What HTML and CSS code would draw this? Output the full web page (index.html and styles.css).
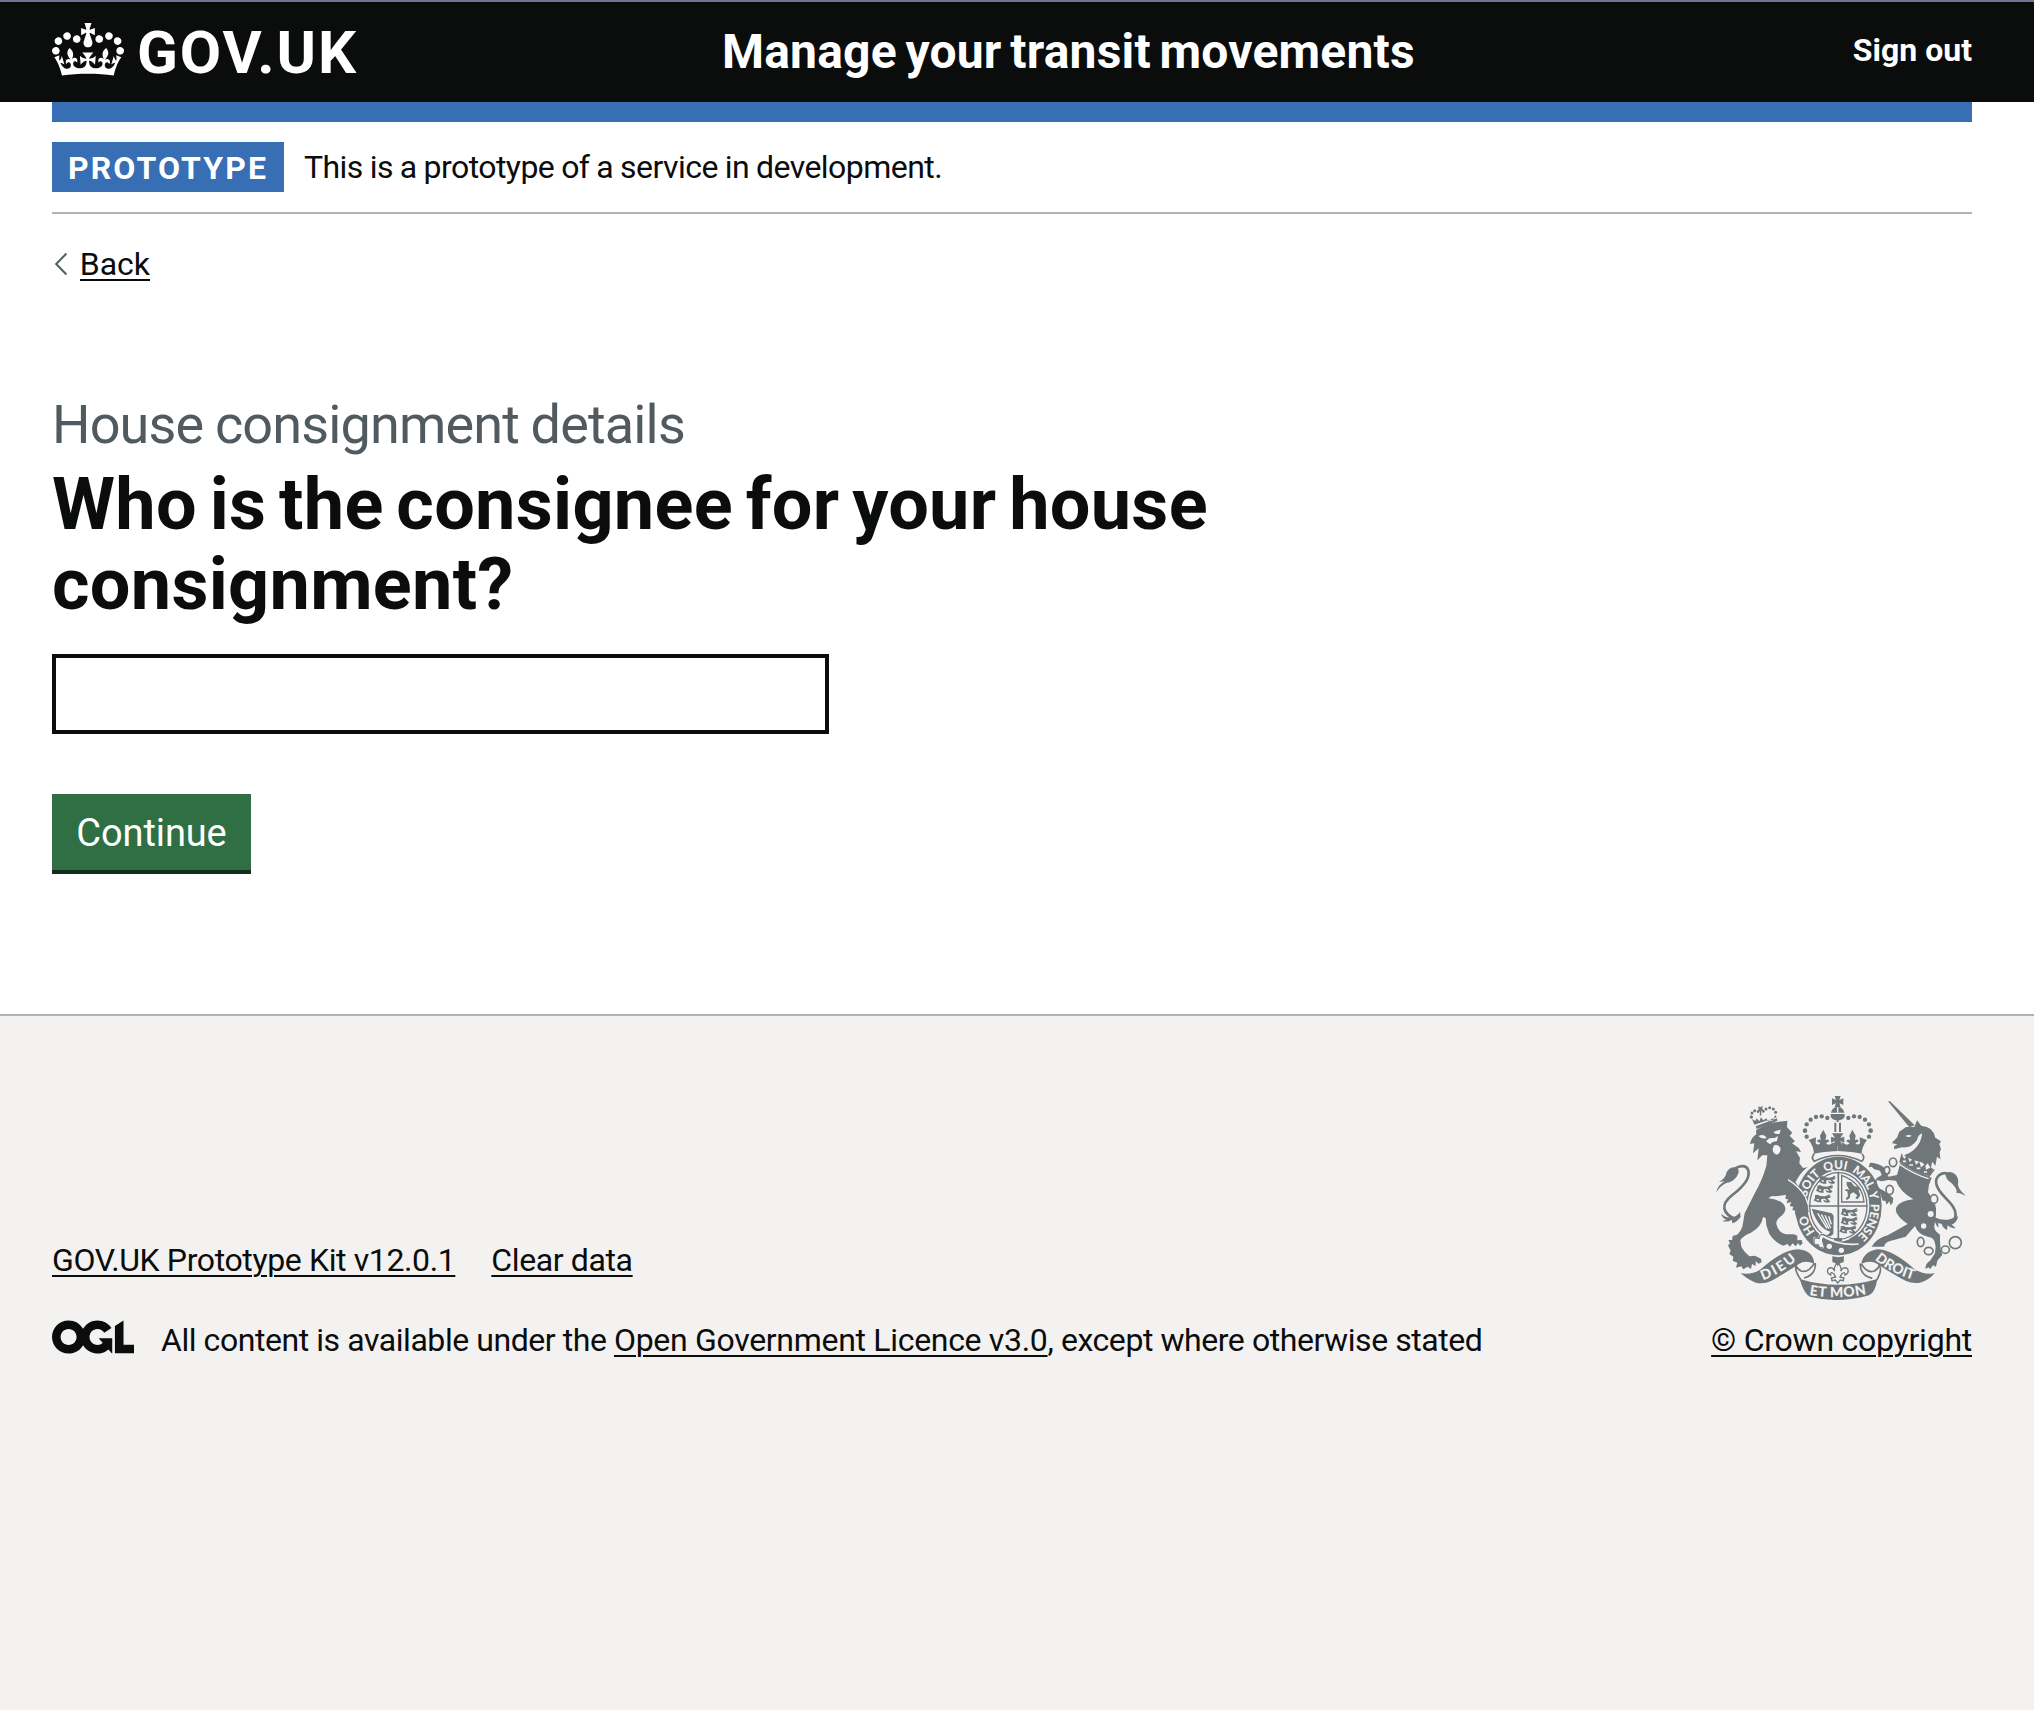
FILE: index.html
```html
<!DOCTYPE html>
<html lang="en">
<head>
<meta charset="utf-8">
<title>Who is the consignee for your house consignment? - Manage your transit movements - GOV.UK</title>
<link rel="stylesheet" href="styles.css">
</head>
<body>
<header class="header">
  <div class="container header-row">
    <a class="logo" href="#">
      <svg class="logo-crown" viewBox="0 0 132 97" aria-hidden="true"><path fill="currentColor" fill-rule="evenodd" d="M25 30.2c3.5 1.5 7.7-.2 9.1-3.7 1.5-3.6-.2-7.8-3.9-9.2-3.6-1.4-7.6.3-9.1 3.9-1.4 3.5.3 7.5 3.9 9zM9 39.5c3.6 1.5 7.8-.2 9.2-3.7 1.5-3.6-.2-7.8-3.9-9.1-3.6-1.5-7.6.2-9.1 3.8-1.4 3.5.3 7.5 3.8 9zM4.4 57.2c3.5 1.5 7.7-.2 9.1-3.8 1.5-3.6-.2-7.7-3.9-9.1-3.5-1.5-7.6.3-9.1 3.8-1.4 3.5.3 7.6 3.9 9.1zm38.3-21.4c3.5 1.5 7.7-.2 9.1-3.8 1.5-3.6-.2-7.7-3.9-9.1-3.6-1.5-7.6.3-9.1 3.8-1.3 3.6.4 7.7 3.9 9.1zm64.4-5.6c-3.6 1.5-7.8-.2-9.1-3.7-1.5-3.6.2-7.8 3.8-9.2 3.6-1.4 7.7.3 9.2 3.9 1.3 3.5-.4 7.5-3.9 9zm15.9 9.3c-3.6 1.5-7.7-.2-9.1-3.7-1.5-3.6.2-7.8 3.7-9.1 3.6-1.5 7.7.2 9.2 3.8 1.5 3.5-.3 7.5-3.8 9zm4.7 17.7c-3.6 1.5-7.8-.2-9.2-3.8-1.5-3.6.2-7.7 3.9-9.1 3.6-1.5 7.7.3 9.2 3.8 1.3 3.5-.4 7.6-3.9 9.1zM89.3 35.8c-3.6 1.5-7.8-.2-9.2-3.8-1.4-3.6.2-7.7 3.9-9.1 3.6-1.5 7.7.3 9.2 3.8 1.4 3.6-.3 7.7-3.9 9.1zM69.7 17.7l8.9 4.7V9.3l-8.9 2.8c-.2-.3-.5-.6-.9-.9L72.4 0H59.6l3.5 11.2c-.3.3-.6.5-.9.9l-8.8-2.8v13.1l8.8-4.7c.3.3.6.7.9.9l-5 15.4v.1c-.2.8-.4 1.6-.4 2.4 0 4.1 3.1 7.5 7 8.1h.2c.3 0 .7.1 1 .1.4 0 .7 0 1-.1h.2c4-.6 7.1-4.1 7.1-8.1 0-.8-.1-1.7-.4-2.4V34l-5.1-15.4c.4-.2.7-.6 1-.9zM66 92.8c16.9 0 32.8 1.1 47.1 3.2 4-16.9 8.9-26.7 14-33.5l-9.6-3.4c1 4.9 1.1 7.2 0 10.2-1.5-1.4-3-4.3-4.2-8.7L108.6 76c2.8-2 5-3.2 7.5-3.3-4.4 9.4-10 11.9-13.6 11.2-4.3-.8-6.3-4.6-5.6-7.9 1-4.7 5.7-5.9 8-.5 4.3-8.7-3-11.4-7.6-8.8 7.1-7.2 7.9-13.5 2.1-21.1-8 6.1-8.1 12.3-4.5 20.8-4.7-5.4-12.1-2.5-9.5 6.2 3.4-5.2 7.9-2 7.2 3.1-.6 4.3-6.4 7.8-13.5 7.2-10.3-.9-10.9-8-11.2-13.8 2.5-.5 7.1 1.8 11 7.3L80.2 60c-4.1 4.4-8 5.3-12.3 5.4 1.4-4.4 8-11.6 8-11.6H55.5s6.4 7.2 7.9 11.6c-4.2-.1-8-1-12.3-5.4l1.4 16.4c3.9-5.5 8.5-7.7 10.9-7.3-.3 5.8-.9 12.8-11.1 13.8-7.2.6-12.9-2.9-13.5-7.2-.7-5 3.8-8.3 7.1-3.1 2.7-8.7-4.6-11.6-9.4-6.2 3.7-8.5 3.6-14.7-4.6-20.8-5.8 7.6-5 13.9 2.2 21.1-4.7-2.6-11.9.1-7.7 8.8 2.3-5.5 7.1-4.2 8.1.5.7 3.3-1.3 7.1-5.7 7.9-3.5.7-9-1.8-13.5-11.2 2.5.1 4.7 1.3 7.5 3.3l-4.7-15.4c-1.2 4.4-2.7 7.2-4.3 8.7-1.1-3-.9-5.3 0-10.2l-9.5 3.4c5 6.9 9.9 16.7 14 33.5 14.8-2.1 30.8-3.2 47.7-3.2z"/></svg>
      <span class="logo-text">GOV.UK</span>
    </a>
    <a class="service-name" href="#">Manage your transit movements</a>
    <a class="sign-out" href="#">Sign out</a>
  </div>
</header>

<div class="container">
  <div class="phase-banner">
    <strong class="tag">PROTOTYPE</strong>
    <span class="phase-text">This is a prototype of a service in development.</span>
  </div>
  <a class="back" href="#"><svg class="back-arrow" viewBox="0 0 14 24" aria-hidden="true"><path d="M12.7 1.3 2.2 12l10.5 10.7" fill="none" stroke="currentColor" stroke-width="2"/></svg><span class="back-text">Back</span></a>
  <main class="main">
    <span class="caption">House consignment details</span>
    <h1 class="heading"><label for="consignee">Who is the consignee for your house consignment?</label></h1>
    <input class="input" id="consignee" type="text">
    <button class="button">Continue</button>
  </main>
</div>

<footer class="footer">
  <div class="container footer-row">
    <div>
      <nav class="footer-links">
        <a class="link" href="#">GOV.UK Prototype Kit v12.0.1</a>
        <a class="link" href="#">Clear data</a>
      </nav>
      <div class="licence">
        <svg class="ogl" viewBox="0 0 483.2 195.7" aria-hidden="true"><path fill="currentColor" d="M421.5 142.8V.1l-50.7 32.3v161.1h112.4v-50.7zm-122.3-9.6A47.12 47.12 0 0 1 221 97.8c0-26 21.1-47.1 47.1-47.1 16.7 0 31.4 8.7 39.7 21.8l42.7-27.2A97.63 97.63 0 0 0 268.1 0c-36.5 0-68.3 20.1-85.1 49.7A98 98 0 0 0 97.8 0C43.9 0 0 43.9 0 97.8s43.9 97.8 97.8 97.8c36.5 0 68.3-20.1 85.1-49.7a97.76 97.76 0 0 0 149.6 25.4l19.4 22.2h3v-87.8h-80l24.3 27.5zM97.8 145c-26 0-47.1-21.1-47.1-47.1s21.1-47.1 47.1-47.1 47.1 21.1 47.1 47.1S123.8 145 97.8 145"/></svg>
        <span>All content is available under the <a class="link licence-link" href="#">Open Government Licence v3.0</a>, except where otherwise stated</span>
      </div>
    </div>
    <div class="copyright">
      <svg class="crest" viewBox="48 48 750 612" aria-hidden="true">
        <defs>
          <path id="garter" d="M415 489C360 489 318 440 318 378S360 267 415 267 512 316 512 378 470 489 415 489"/>
          <path id="dieu" d="M189 601Q245 580 291 539"/>
          <path id="etmon" d="M328 645Q415 660 504 641"/>
          <path id="droit" d="M524 538Q570 580 646 601"/>
          <g id="passant"><path d="M2 2l8-2 7 4 14 1 10-3 8 3-2 5-8 1 5 6-5 2-7-7-10 1-3 7-7 1 2-7-6-2-4 7-6-1 4-9zM4 14l8 4 8 0 2 5-10 0-9-3zM26 15l10 3 8-2 4 5-8 3-10-2z"/><path d="M38 6q7-9 10-4" fill="none" stroke-width="3" class="line"/></g>
          <g id="half-crown"><circle cx="382" cy="114" r="6.500"/><circle cx="365" cy="109" r="6.500"/><circle cx="348" cy="111" r="6.500"/><circle cx="332" cy="119" r="6.500"/><circle cx="320" cy="133" r="6.500"/><circle cx="315" cy="152" r="7"/><circle cx="320" cy="170" r="6.500"/>
            <path d="M342 221Q341 199 326 180L348 172 347 190Q354 197 361 190L351 184Q352 176 362 180L360 167 370 149 379 167 376 180Q386 176 388 184L378 190Q386 198 396 190L404 186 400 194 413 190V213Q370 215 342 221z"/></g>
        </defs>
        <!-- royal crown -->
        <g class="fill">
          <path d="M404 48h18l-4 12 12-5v20l-12-5 4 11h-18l4-11-12 5V55l12 5zM393 98h40q-3-15-17-17h-6q-14 2-17 17zM392 102h42v9q-8 12-18 9v6h-6v-6q-10 3-18-9zM403 128h6v28h-6zM417 128h6v28h-6zM396 160h34l-9 14 12-4v18l-12-5 6 16h-28l6-16-12 5v-18l12 4z"/>
          <use href="#half-crown"/><use href="#half-crown" transform="matrix(-1 0 0 1 827 0)"/>
        </g>
        <path d="M411 82h4v16h-4z" class="paper"/>
        <path d="M343 221q-11 12 0 23 70-35 142 0 12-10 1-23" fill="none" stroke-width="5" class="line"/>

        <!-- garter and shield -->
        <ellipse cx="415" cy="378" rx="130" ry="148" class="fill"/>
        <ellipse cx="415" cy="378" rx="93" ry="107" class="paper"/>
        <ellipse cx="415" cy="378" rx="86" ry="100" fill="none" stroke-width="4" class="line"/>
        <path d="M415 275v210M326 378h177" fill="none" stroke-width="5" class="line"/>
        <g class="fill">
          <use href="#passant" x="358" y="288"/><use href="#passant" x="350" y="315"/><use href="#passant" x="343" y="344"/>
          <use href="#passant" x="424" y="385"/><use href="#passant" x="424" y="411"/><use href="#passant" x="420" y="437"/>
          <path d="M440 305L454 307 463 319 475 320 483 330 475 329 481 346 473 358 466 355 472 346 460 337 451 342 450 353 441 360 437 356 444 348 442 334 434 332 439 327 448 329 440 315z"/>
          <path d="M335 386L395 400 401 407 400 461Q395 471 374 468 388 463 391 455 356 447 335 386z"/>
          <path d="M402 474h24v10h-24zM448 476Q470 465 486 450L480 470 462 484z"/>
        </g>
        <path d="M425 286V366H492Q488 310 425 286z" fill="none" stroke-width="4" class="line"/>
        <path d="M353 400l28 45M364 403l23 43M375 406l17 38M386 409l8 24" fill="none" stroke-width="4" class="paper-line"/>
        <g class="motto garter-text">
          <text><textPath href="#garter" startOffset="80">HO</textPath></text>
          <text><textPath href="#garter" startOffset="190">SOIT</textPath></text>
          <text><textPath href="#garter" startOffset="286">QUI</textPath></text>
          <text><textPath href="#garter" startOffset="369" textLength="74">MAL</textPath></text>
          <text><textPath href="#garter" startOffset="450">Y</textPath></text>
          <text><textPath href="#garter" startOffset="485" textLength="108">PENSE</textPath></text>
        </g>
        <path d="M371 470Q420 498 476 492" fill="none" stroke-width="5" class="paper-line"/>
        <path d="M378 463Q356 452 355 472 336 466 340 480 338 498 353 495 358 510 372 504L368 490Q360 478 378 463z" class="paper"/>
        <path d="M376 466Q358 458 357 475 340 469 342 483 340 498 354 494 358 507 370 503" fill="none" stroke-width="4" class="line"/>
        <circle cx="388" cy="499" r="8" class="paper"/><circle cx="424" cy="511" r="8" class="paper"/>

        <!-- lion -->
        <path d="M112 420C66 402 60 374 97 345 130 320 151 294 145 271 140 256 122 254 105 266" fill="none" stroke-width="8" class="line"/>
        <g class="fill">
          <path d="M49 337Q52 316 74 304L57 306Q77 295 80 276 90 258 112 263 121 272 110 290 98 306 79 309 59 319 49 337z"/>
          <path d="M120 396Q108 414 88 412 74 412 64 401 66 415 80 419L67 423Q84 428 95 419L97 430Q111 426 122 410z"/>
          <path d="M167 139L231 115 232 122 170 147zM163 134L156 117 166 123 170 115 178 124 183 112 190 121 199 115 204 123 213 116 216 125 226 105 230 112z"/>
          <circle cx="154" cy="111" r="5"/><circle cx="156" cy="99" r="4.500"/><circle cx="164" cy="92" r="4.500"/><circle cx="174" cy="95" r="4"/><circle cx="190" cy="94" r="4"/><circle cx="198" cy="87" r="4.500"/><circle cx="209" cy="83" r="4.500"/><circle cx="220" cy="87" r="4.500"/><circle cx="227" cy="97" r="4.500"/>
          <path d="M174 79L181 82 188 77 187 86 191 91 184 93 184 106 179 107 180 95 173 92 176 86z"/>
          <path d="M168 151Q203 126 237 125L262 122 261 142 277 158 269 167 285 184 276 190 297 205 303 216 288 214 300 234 298 250 309 264 323 262 300 286 288 308 300 326 312 348 322 372 326 395 316 401 303 402 302 410 292 402 285 404 286 392 277 390 280 380 269 378 274 366 260 370 264 358 256 356 258 344Q232 350 218 348 205 352 206 355 245 360 254 378 262 395 240 411 228 420 229 432 235 458 258 463L282 463 292 467 292 481 305 480 308 490 300 497 294 489 287 499 278 490 270 500 262 492 250 497Q225 488 208 462L199 436 197 414 189 411Q185 440 153 458 130 467 121 480L124 500 134 515 148 529 165 527 183 536 185 547 176 551 167 544 167 558 156 552 153 567 143 560 130 568 124 559 108 563 112 548 98 542 100 530 88 522 92 512 84 496 90 490 85 480 97 480Q95 464 108 466 120 458 127 440 130 425 134 400 148 372 165 338 185 305 199 258L202 226 187 226 172 241 176 205 159 220 163 190 150 192Q154 172 169 163z"/>
        </g>
        <path d="M175 168q12 11 25 6-6-11-16-9zM220 156q6 9 19 5l3-12q-11 2-22 7zM198 184L208 175 224 174 234 168 231 183 218 186 210 193zM222 196Q234 192 241 203 244 219 231 224 217 221 218 207z" class="paper"/>
        <path d="M264 299Q298 320 316 350L324 372" fill="none" stroke-width="4" class="paper-line"/>
        <path d="M322 265Q302 280 288 308" fill="none" stroke-width="4" class="paper-line"/>

        <!-- unicorn -->
        <path d="M744 281C725 274 704 290 709 312 714 345 768 370 767 404 766 420 758 426 747 426" fill="none" stroke-width="8" class="line"/>
        <g class="fill">
          <path d="M736 280Q754 270 767 284 777 294 774 315 777 330 798 348 780 338 769 338 773 328 755 310 736 298 736 280z"/>
          <path d="M774 408Q772 428 755 434L767 444Q753 447 743 436L741 450Q729 445 725 432L714 429 716 443Q703 434 704 412 728 423 750 418z"/>
          <path d="M564 64L570 64 644 136 628 142z"/>
          <path d="M577 187L591 173 598 155 618 141 643 141 651 121 664 137Q700 140 706 173L723 184 718 192 723 208 719 216 721 238 711 230 706 258 697 245 692 265 683 250 676 258 668 248Q630 240 612 226 645 215 660 185 666 172 666 160 655 164 651 180 635 205 605 202L583 208 582 199 592 193 577 190z"/>
          <path d="M601 249Q645 280 695 293 684 315 684 337 705 365 708 385 710 405 704 430 698 452 720 464L720 485 722 510 727 524 712 542 708 560 699 556 690 568 686 562 676 567Q676 550 690 542L705 520 707 500Q705 470 683 470 655 465 645 438L617 470 582 480Q555 484 552 500L515 500Q530 475 563 466L598 446 623 432Q578 400 590 380 602 362 640 358 600 335 588 302L565 300 545 304 530 300Q530 325 548 330L568 344 580 355 578 368 572 376 568 364 560 374 556 362 548 362 540 340 522 325Q515 300 545 285L540 272 523 268 515 260 506 262 510 248Q530 248 550 260L566 290 591 285z"/>
        </g>
        <path d="M616 168q10-5 19-1-8 8-19 1z" class="paper"/>
        <path d="M605 224L613 237 622 226 629 246 641 234 648 254 658 245 663 262 675 253 678 269 693 262 700 268 688 288Q640 275 601 245z" class="fill"/>
        <path d="M606 222L600 246Q644 276 686 290L703 268" fill="none" stroke-width="4" class="line"/>
        <path d="M597 252Q640 283 686 296" fill="none" stroke-width="4" class="paper-line"/>
        <path d="M609 244h9M628 255h11M650 265h11M672 276h9" fill="none" stroke-width="5" class="paper-line"/>
        <g fill="none" stroke-width="5" class="line">
          <ellipse cx="579" cy="247" rx="11" ry="13"/><ellipse cx="569" cy="330" rx="11" ry="14" class="paper-fill"/><ellipse cx="702" cy="357" rx="11" ry="13" class="paper-fill"/><ellipse cx="662" cy="486" rx="10" ry="14"/><ellipse cx="686" cy="513" rx="13" ry="11"/><ellipse cx="736" cy="509" rx="12" ry="11"/><circle cx="766" cy="488" r="18"/><ellipse cx="561" cy="271" rx="8" ry="11" class="paper-fill"/>
        </g>
        <circle cx="692" cy="402" r="9" class="paper"/><circle cx="671" cy="438" r="8" class="paper"/>

        <!-- motto ribbons -->
        <g class="fill">
          <path d="M122 580Q157 586 183 567 250 508 294 508 339 511 343 551 315 539 298 551 245 586 213 603 192 613 168 608 148 602 122 580z"/>
          <path d="M704 580Q669 585 643 567 576 508 532 508 490 515 484 551 512 539 531 551 584 586 618 603 638 612 660 608 685 602 704 580z"/>
          <path d="M299 597Q414 632 532 597 526 638 507 646 417 672 330 650 312 642 299 597z"/>
        </g>
        <path d="M343 550Q324 580 303 573 294 568 288 558M303 600Q280 567 290 552L300 543M346 549Q348 585 312 594M484 552Q503 582 523 573 532 568 538 558M530 600Q550 567 535 552M481 550Q479 586 517 595" fill="none" stroke-width="5" class="line"/>
        <g class="motto ribbon-text">
          <text><textPath href="#dieu" textLength="118">DIEU</textPath></text>
          <text><textPath href="#etmon" textLength="172">ET MON</textPath></text>
          <text><textPath href="#droit" textLength="132">DROIT</textPath></text>
        </g>
        <!-- fleur-de-lis -->
        <path d="M397 529q18 5 35 0l-1 18q-16 2-18 13-2-11-16-14z" class="fill"/>
        <path d="M413 547Q399 563 404 574 397 557 384 567 379 581 392 585 391 572 402 582L407 591 394 594 396 602 406 600 413 609 421 600 430 602 432 594 420 591 425 582Q435 572 435 585 448 581 443 567 430 557 422 574 427 563 413 547z" fill="none" stroke-width="4" class="line"/>
      </svg>
      <a class="link copyright-link" href="#">© Crown copyright</a>
    </div>
  </div>
</footer>
</body>
</html>
```
FILE: styles.css
```css
* { box-sizing: border-box; }
html { background: #f3f2f1; }
body {
  margin: 0;
  background: #fff;
  color: #0b0c0c;
  font: 32px/40px Roboto, "Liberation Sans", Arial, sans-serif;
}
.container { margin: 0 62px 0 52px; }
.link {
  color: inherit;
  text-decoration: underline;
  text-decoration-thickness: 2px;
  text-underline-offset: 4px;
}

/* Header */
.header { height: 102px; background: #0b0c0c; border-top: 2px solid #6f7394; color: #fff; }
.header-row { display: grid; grid-template-columns: 670px 1fr auto; align-items: start; height: 120px; border-bottom: 20px solid #376eb4; }
.header a { color: inherit; text-decoration: none; font-weight: 700; }
.logo { display: flex; gap: 13px; padding-top: 21px; }
.logo-crown { width: 72px; height: 53px; }
.logo-text { font-size: 60px; line-height: 60px; letter-spacing: 1.9px; }
.service-name { padding-top: 20px; font-size: 48px; line-height: 60px; letter-spacing: .2px; word-spacing: -3.5px; }
.sign-out { padding-top: 28px; }

/* Phase banner */
.phase-banner { display: flex; gap: 20px; margin-top: 20px; padding: 20px 0; line-height: 50px; border-bottom: 2px solid #b1b4b6; }
.tag { height: 50px; width: 232px; padding: 1px 0 0 16px; background: #376eb4; color: #fff; letter-spacing: 2.1px; }
.phase-text { letter-spacing: -.55px; word-spacing: -.5px; }

/* Back link */
.back { display: flex; width: 98px; margin-top: 30px; color: inherit; text-decoration: none; }
.back-arrow { width: 14px; height: 24px; margin: 8px 12px 0 2px; color: #505a5f; }
.back-text { height: 37px; border-bottom: 2px solid #0b0c0c; }

/* Question */
.main { display: flex; flex-direction: column; align-items: flex-start; margin-top: 114px; padding-bottom: 140px; }
.caption { color: #505a5f; font-size: 54px; line-height: 60px; letter-spacing: -.85px; word-spacing: -1px; }
.heading { width: 1280px; margin: 10px 0 29px; font-size: 72px; line-height: 80px; letter-spacing: .3px; word-spacing: -5.4px; }
.input { width: 777px; height: 80px; border: 4px solid #0b0c0c; border-radius: 0; background: #fff; font: inherit; }
.button { width: 199px; height: 80px; margin-top: 60px; padding: 3px 0 0; border: 0; border-bottom: 4px solid #112f1d; background: #2f6f43; color: #fff; font: 38px/73px Roboto, "Liberation Sans", sans-serif; letter-spacing: -.1px; }

/* Footer */
.footer { min-height: 696px; padding-top: 80px; border-top: 2px solid #b1b4b6; background: #f3f2f1; }
.footer-row { display: flex; justify-content: space-between; align-items: flex-end; }
.footer-links { display: flex; gap: 36px; margin-bottom: 40px; letter-spacing: -.38px; }
.licence { display: flex; gap: 27px; letter-spacing: -.44px; }
.licence-link { letter-spacing: -.31px; }
.copyright-link { letter-spacing: -.24px; }
.ogl { width: 82px; height: 34px; }
.copyright { display: flex; flex-direction: column; align-items: flex-end; }
.crest { width: 250px; height: 204px; margin: 0 6px 20px 0; }
.crest .fill { fill: #6f777b; }
.crest .line { stroke: #6f777b; }
.crest .paper, .crest .paper-fill { fill: #f3f2f1; }
.crest .paper-line { stroke: #f3f2f1; }
.motto { fill: #f3f2f1; font-family: Lato, sans-serif; font-weight: 900; }
.garter-text { font-size: 36px; }
.ribbon-text { font-size: 42px; }
```
